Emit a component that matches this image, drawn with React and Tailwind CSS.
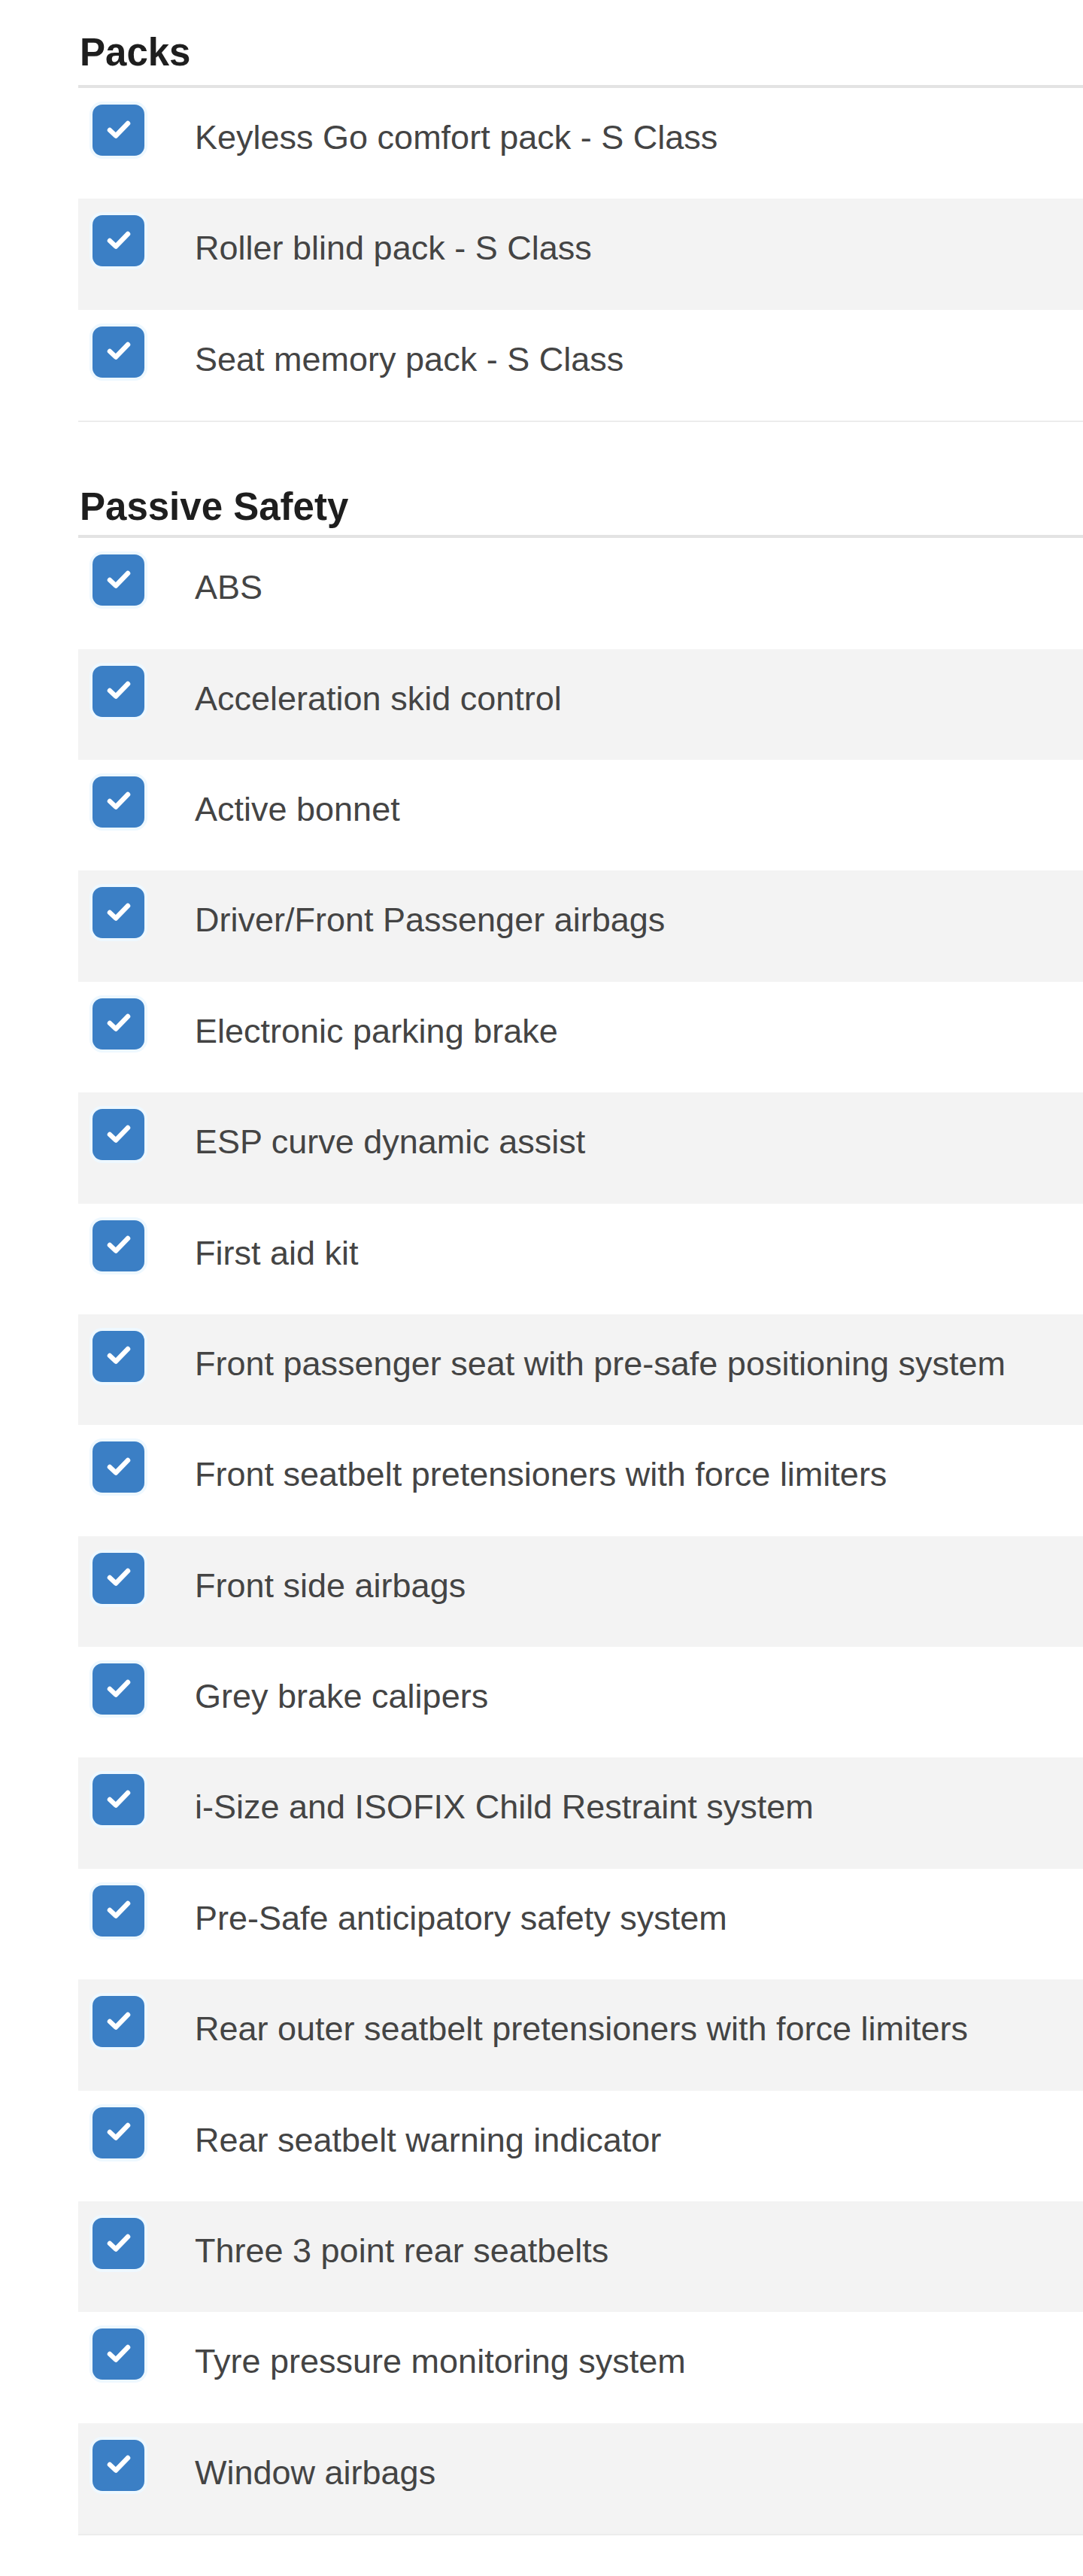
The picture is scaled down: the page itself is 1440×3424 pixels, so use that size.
import React from 'react';

const packs = [
  'Keyless Go comfort pack - S Class',
  'Roller blind pack - S Class',
  'Seat memory pack - S Class',
];

const passiveSafety = [
  'ABS',
  'Acceleration skid control',
  'Active bonnet',
  'Driver/Front Passenger airbags',
  'Electronic parking brake',
  'ESP curve dynamic assist',
  'First aid kit',
  'Front passenger seat with pre-safe positioning system',
  'Front seatbelt pretensioners with force limiters',
  'Front side airbags',
  'Grey brake calipers',
  'i-Size and ISOFIX Child Restraint system',
  'Pre-Safe anticipatory safety system',
  'Rear outer seatbelt pretensioners with force limiters',
  'Rear seatbelt warning indicator',
  'Three 3 point rear seatbelts',
  'Tyre pressure monitoring system',
  'Window airbags',
];

function CheckBox() {
  return (
    <div className="mt-[22px] flex h-[68px] w-[69px] shrink-0 items-center justify-center rounded-[13px] bg-[#3b7fc5] shadow-[0_0_0_4px_#eef8ff]">
      <svg width="32" height="28" viewBox="0 0 32 28" className="-mt-[3px]">
        <path
          d="M4 15 L12 22.5 L28 6"
          fill="none"
          stroke="#ffffff"
          strokeWidth="6.5"
          strokeLinecap="round"
          strokeLinejoin="round"
        />
      </svg>
    </div>
  );
}

function FeatureTable({ items }) {
  return (
    <div className="border-b-2 border-[#ececec]">
      {items.map((item, i) => (
        <div
          key={item}
          className={`flex h-[147.4px] items-start pl-[19px] ${i % 2 === 1 ? 'bg-[#f3f3f3]' : 'bg-white'}`}
        >
          <CheckBox />
          <div className="ml-[67px] pt-[34px] text-[45px] leading-[64px] whitespace-nowrap text-[#444444]">
            {item}
          </div>
        </div>
      ))}
    </div>
  );
}

export default function App() {
  return (
    <div
      className="min-h-[3424px] w-full overflow-hidden bg-white pl-[104px] pt-[40px]"
      style={{ fontFamily: '"Liberation Sans", Arial, sans-serif' }}
    >
      {/* Packs */}
      <h3 className="border-b-4 border-[#e3e3e3] pb-[13px] pl-[2px] text-[51px] font-bold leading-[60px] text-[#1e1e1e]">
        Packs
      </h3>
      <FeatureTable items={packs} />

      {/* Passive Safety */}
      <h3 className="mt-[83px] border-b-4 border-[#e3e3e3] pb-[7px] pl-[2px] text-[51px] font-bold leading-[60px] text-[#1e1e1e]">
        Passive Safety
      </h3>
      <FeatureTable items={passiveSafety} />
    </div>
  );
}
